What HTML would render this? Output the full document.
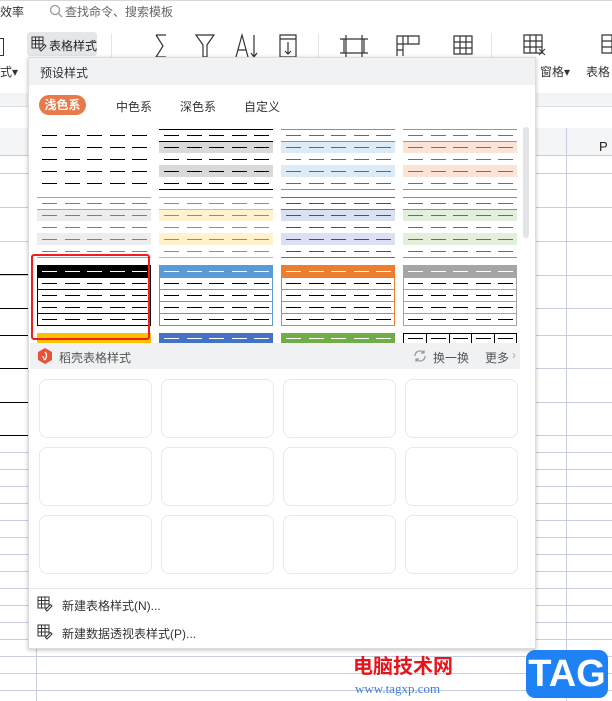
<!DOCTYPE html>
<html><head><meta charset="utf-8">
<style>
*{margin:0;padding:0;box-sizing:border-box}
body{width:612px;height:701px;overflow:hidden;background:#fff;position:relative;font-family:"Liberation Sans","Noto Sans CJK SC",sans-serif;font-size:12px;color:#333}
.a{position:absolute}
.hl{position:absolute;height:1px;background:#c8cde0}
.vl{position:absolute;width:1px;background:#c8cde0}
.bl{position:absolute;height:1px;background:#000}
</style></head><body>
<!-- top bar -->
<div class="a" style="left:0;top:0;width:612px;height:1px;background:#d8d8d8"></div>
<div class="a" style="left:0;top:3px;font-size:12px">效率</div>
<svg class="a" style="left:49px;top:4px" width="14" height="14"><circle cx="6" cy="6" r="4.5" fill="none" stroke="#999" stroke-width="1.3"/><line x1="9.5" y1="9.5" x2="13" y2="13" stroke="#999" stroke-width="1.3"/></svg>
<div class="a" style="left:65px;top:3px;color:#666">查找命令、搜索模板</div>
<!-- ribbon -->
<div class="a" style="left:27px;top:32px;width:70px;height:24px;background:#e4e6ea;border-radius:3px"></div>
<svg class="a" style="left:31px;top:36px" width="16" height="16"><path d="M1 1h11v11H1zM1 4.5h11M1 8h11M4.5 1v11M8 1v11" fill="none" stroke="#333"/><path d="M10 15l5-5-1.5-1.5-5 5z" fill="#fff" stroke="#333"/></svg>
<div class="a" style="left:49px;top:37px;color:#222">表格样式</div>
<div class="a" style="left:90px;top:38px;font-size:8px;color:#666">▾</div>
<div class="a" style="left:0;top:63px">式▾</div>
<div class="a" style="left:0;top:38px;width:4px;height:18px;border:1px solid #333;border-left:none"></div>
<svg class="a" style="left:120px;top:30px;width:500px;height:30px" viewBox="0 0 500 30">
<g fill="none" stroke="#333" stroke-width="1.2">
<path d="M36 5h10M36 5l7 11-7 11h10"/>
<path d="M76 5h18l-7 10v12h-4V15z"/>
<path d="M116 27l6-22 6 22M118 20h8M134 5v22M131 23l3 4 3-4"/>
<path d="M160 5h16v22h-16zM160 9h16M168 12v12M165 21l3 3 3-3"/>
<path d="M224 9h20v14h-20zM226 5v22M242 5v22M220 9h28M220 23h28"/>
<path d="M277 6h22v8h-22zM277 6v20M283 6v20M277 14v12M277 20h6M288 6v8"/>
<path d="M334 6h18v18h-18zM334 12h18M334 18h18M340 6v18M346 6v18"/>
<path d="M404 5h18v18h-18zM404 11h18M404 17h18M410 5v18M416 5v18"/>
<path d="M419 19l6 6M425 19l-6 6" stroke-width="1"/>
<path d="M482 5h10v18h-10zM482 11h10M482 17h10"/>
</g>
<line x1="80" y1="0" x2="80" y2="30" stroke="#e0e0e0" opacity="0"/>
</svg>
<div class="a" style="left:111px;top:33px;width:1px;height:40px;background:#e5e5e5"></div>
<div class="a" style="left:318px;top:33px;width:1px;height:40px;background:#e5e5e5"></div>
<div class="a" style="left:491px;top:33px;width:1px;height:60px;background:#e5e5e5"></div>
<div class="a" style="left:540px;top:63px">窗格▾</div>
<div class="a" style="left:586px;top:63px">表格</div>
<!-- ribbon bottom / sheet -->
<div class="a" style="left:0;top:93px;width:612px;height:13px;background:#f3f4f6"></div>
<div class="a" style="left:0;top:106px;width:612px;height:1px;background:#dfe1e5"></div>
<div class="a" style="left:0;top:128px;width:612px;height:28px;background:#f4f5f7;border-bottom:1px solid #c8cde0"></div>
<div class="a" style="left:599px;top:139px;font-size:13px;color:#222">P</div>
<div class="vl" style="left:566px;top:128px;height:573px"></div>
<div class="vl" style="left:36px;top:640px;height:61px"></div>
<div id="g"></div>
<!-- panel -->
<div class="a" style="left:28px;top:57px;width:508px;height:592px;background:#fff;box-shadow:0 1px 4px rgba(0,0,0,.25);border:1px solid #ddd"></div>
<div class="a" style="left:29px;top:58px;width:506px;height:27px;background:#f1f2f4"></div>
<div class="a" style="left:40px;top:64px;color:#333">预设样式</div>
<div class="a" style="left:39px;top:95px;width:47px;height:20px;background:#e87a4a;border-radius:10px;color:#fff;text-align:center;line-height:20px;font-weight:bold">浅色系</div>
<div class="a" style="left:116px;top:98px">中色系</div>
<div class="a" style="left:180px;top:98px">深色系</div>
<div class="a" style="left:244px;top:98px">自定义</div>
<div class="a" style="left:523px;top:127px;width:6px;height:111px;background:#e3e4e6;border-radius:3px"></div>
<div id="p"></div>
<div class="a" style="left:31px;top:254px;width:119px;height:86px;border:2px solid #f01e1e;border-radius:3px"></div>
<!-- docer bar -->
<div class="a" style="left:30px;top:343px;width:490px;height:26px;background:#f0f1f3"></div>
<svg class="a" style="left:38px;top:348px" width="14" height="16"><path d="M7 0l7 4v8l-7 4-7-4V4z" fill="#e8523a"/><path d="M7 4c2 2 2 4 0 8M5 8c0 2 1 3 2 4" stroke="#fff" stroke-width="1.3" fill="none"/></svg>
<div class="a" style="left:59px;top:349px;color:#555">稻壳表格样式</div>
<svg class="a" style="left:413px;top:349px" width="14" height="14"><path d="M2 7a5 5 0 0 1 9-3M12 7a5 5 0 0 1-9 3M11 1v3H8M3 13v-3h3" fill="none" stroke="#999" stroke-width="1.2"/></svg>
<div class="a" style="left:433px;top:349px;color:#555">换一换</div>
<div class="a" style="left:485px;top:349px;color:#555">更多</div>
<div class="a" style="left:512px;top:348px;color:#aaa">›</div>
<div id="c"></div>
<div class="a" style="left:30px;top:588px;width:504px;height:1px;background:#e5e5e5"></div>
<svg class="a" style="left:37px;top:596px" width="16" height="16"><path d="M1 1h11v11H1zM1 4.5h11M1 8h11M4.5 1v11M8 1v11" fill="none" stroke="#333"/><path d="M10 15l5-5-1.5-1.5-5 5z" fill="#fff" stroke="#333"/></svg>
<div class="a" style="left:62px;top:597px;color:#333">新建表格样式(N)...</div>
<svg class="a" style="left:37px;top:624px" width="16" height="16"><path d="M1 1h11v11H1zM1 4.5h11M1 8h11M4.5 1v11M8 1v11" fill="none" stroke="#333"/><path d="M10 15l5-5-1.5-1.5-5 5z" fill="#fff" stroke="#333"/></svg>
<div class="a" style="left:62px;top:625px;color:#333">新建数据透视表样式(P)...</div>
<!-- watermark -->
<div class="a" style="left:353px;top:650px;font-size:20px;font-weight:bold;color:#e8141c">电脑技术网</div>
<div class="a" style="left:355px;top:681px;font-size:13px;color:#3a7de0;font-family:'Liberation Serif',serif">www.tagxp.com</div>
<div class="a" style="left:526px;top:650px;width:82px;height:48px;background:#1e82f5;border-radius:9px;color:#fff;font-size:38px;font-weight:bold;text-align:center;line-height:48px">TAG</div>
<script>
var g=document.getElementById('g'),h='';
var rows=[173,207,241,275,308,335,368,402,435,452,469,486,503,520,537,554,571,588,605,622,639,656,673,690];
rows.forEach(function(y){h+='<div class="hl" style="left:0;top:'+y+'px;width:612px"></div>';});
[274,308,335,368,402,435].forEach(function(y){h+='<div class="bl" style="left:0;top:'+y+'px;width:30px"></div>';});
g.innerHTML=h;
var p='';
var xs=[37,159,281,403],W=114;
function dashes(x,y,c){var s='';for(var i=0;i<5;i++)s+='<div class="a" style="left:'+(x+5+i*22.5)+'px;top:'+y+'px;width:15px;height:1px;background:'+c+'"></div>';return s;}
function line(x,y,c,w){return '<div class="a" style="left:'+x+'px;top:'+y+'px;width:'+W+'px;height:'+(w||1)+'px;background:'+c+'"></div>';}
function band(x,y,c,hh){return '<div class="a" style="left:'+x+'px;top:'+y+'px;width:'+W+'px;height:'+(hh||12)+'px;background:'+c+'"></div>';}
// row1
var y0=129;
for(var r=0;r<5;r++)p+=dashes(37,y0+6+r*12,'#000');
var s1=[[159,'#000','#d9d9d9','#000'],[281,'#5b9bd5','#ddebf7','#2e75b6'],[403,'#ed7d31','#fbe4d5','#c55a11']];
s1.forEach(function(s){p+=line(s[0],y0,s[1]);p+=band(s[0],y0+12,s[2]);p+=band(s[0],y0+36,s[2]);p+=line(s[0],y0+12,s[1]);p+=line(s[0],y0+60,s[1]);for(var r=0;r<5;r++)p+=dashes(s[0],y0+6+r*12,s[3]);});
// row2
y0=197;
var s2=[[37,'#a5a5a5','#ededed','#7f7f7f'],[159,'#ffc000','#fff2cc','#bf8f00'],[281,'#4472c4','#d9e1f2','#2f5597'],[403,'#70ad47','#e2efda','#548235']];
s2.forEach(function(s){p+=line(s[0],y0,s[1]);p+=band(s[0],y0+12,s[2]);p+=band(s[0],y0+36,s[2]);p+=line(s[0],y0+12,s[1]);p+=line(s[0],y0+60,s[1]);for(var r=0;r<5;r++)p+=dashes(s[0],y0+6+r*12,s[3]);});
// row3
y0=265;
var s3=[[37,'#000'],[159,'#5b9bd5'],[281,'#ed7d31'],[403,'#a5a5a5']];
s3.forEach(function(s){p+=band(s[0],y0,s[1],13);p+=dashes(s[0],y0+6,'#fff');p+='<div class="a" style="left:'+s[0]+'px;top:'+(y0+12)+'px;width:'+W+'px;height:49px;border:1px solid '+s[1]+'"></div>';for(var r=1;r<4;r++)p+=line(s[0],y0+12+r*12,s[1]);for(var r=1;r<5;r++)p+=dashes(s[0],y0+6+r*12,'#000');});
// row4
y0=333;
[[37,'#ffc000'],[159,'#4472c4'],[281,'#70ad47']].forEach(function(s){p+=band(s[0],y0,s[1],10);p+=dashes(s[0],y0+5,'#fff');});
p+='<div class="a" style="left:403px;top:333px;width:114px;height:12px;border:1px solid #000;border-bottom:none"></div>';
for(var i=1;i<5;i++)p+='<div class="a" style="left:'+(403+i*22.8)+'px;top:333px;width:1px;height:10px;background:#000"></div>';
p+=dashes(403,338,'#000');
document.getElementById('p').innerHTML=p;
var c='';
[379,447,515].forEach(function(y){[39,161,283,405].forEach(function(x){c+='<div class="a" style="left:'+x+'px;top:'+y+'px;width:113px;height:59px;border:1px solid #e8e9eb;border-radius:8px"></div>';});});
document.getElementById('c').innerHTML=c;
</script>
</body></html>
